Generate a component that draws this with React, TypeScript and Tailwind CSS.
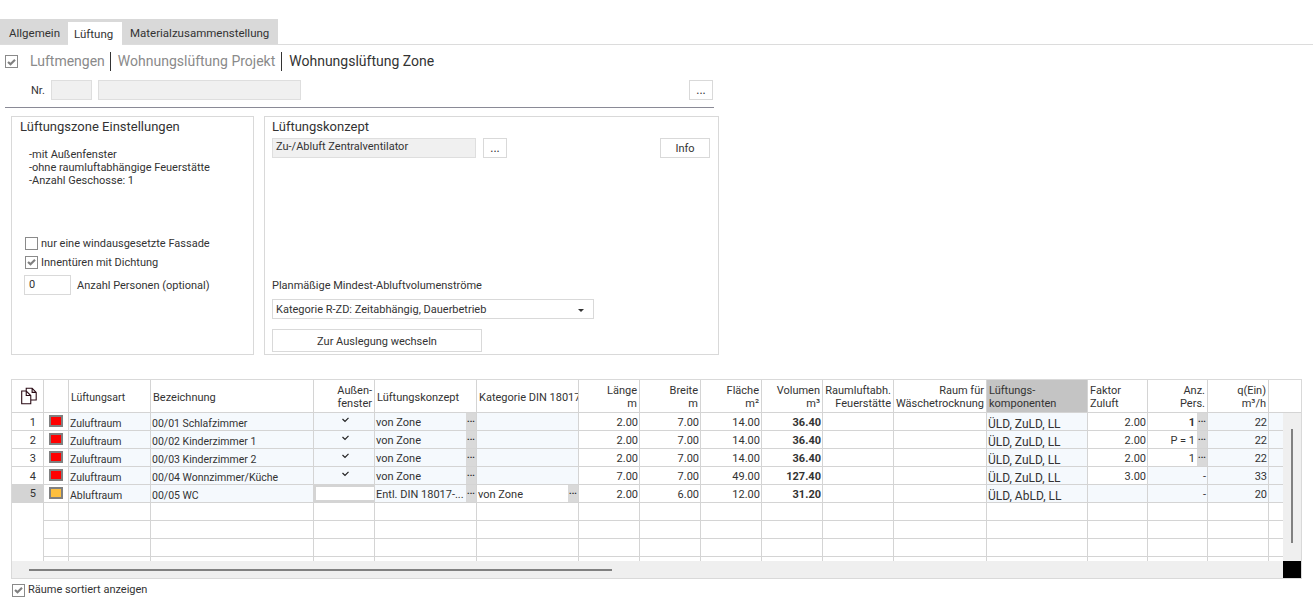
import React from "react";

const font = "font-['Roboto',sans-serif]";

function CheckBox({ checked }: { checked?: boolean }) {
  return (
    <span className="w-[13px] h-[13px] border border-[#8a8a8a] bg-white flex items-center justify-center shrink-0">
      {checked && (
        <svg width="9" height="8" viewBox="0 0 9 8">
          <path d="M1 4 L3.5 6.2 L8 1.8" fill="none" stroke="#808080" strokeWidth="2.2" />
        </svg>
      )}
    </span>
  );
}

function DotsButton({ className }: { className: string }) {
  return (
    <div className={`border border-[#d9d9d9] bg-white flex items-center justify-center text-[12px] text-[#333] ${className}`}>...</div>
  );
}

// Roboto sits a bit high compared to the original font, this pushes text down 2px
function T({ className = "", children }: { className?: string; children?: React.ReactNode }) {
  return <span className={`pt-[4px] ${className}`}>{children}</span>;
}

const colClasses = [
  "w-[32px]", "w-[25px]", "w-[82px]", "w-[163px]", "w-[61px]", "w-[102px]", "w-[102px]", "w-[61px]", "w-[61px]",
  "w-[61px]", "w-[61px]", "w-[71px]", "w-[93px]", "w-[101px]", "w-[60px]", "w-[60px]", "w-[61px]",
];

type Head = { lines: string[]; right?: boolean; bg?: string; size?: string };
const heads: Head[] = [
  { lines: [] },
  { lines: [] },
  { lines: ["Lüftungsart"], size: "text-[10.5px]" },
  { lines: ["Bezeichnung"] },
  { lines: ["Außen-", "fenster"], right: true },
  { lines: ["Lüftungskonzept"] },
  { lines: ["Kategorie DIN 18017"] },
  { lines: ["Länge", "m"], right: true },
  { lines: ["Breite", "m"], right: true },
  { lines: ["Fläche", "m²"], right: true },
  { lines: ["Volumen", "m³"], right: true },
  { lines: ["Raumluftabh.", "Feuerstätte"], right: true },
  { lines: ["Raum für", "Wäschetrocknung"], right: true },
  { lines: ["Lüftungs-", "komponenten"], bg: "bg-[#c4c4c4]" },
  { lines: ["Faktor", "Zuluft"] },
  { lines: ["Anz.", "Pers."], right: true },
  { lines: ["q(Ein)", "m³/h"], right: true },
];

const rows = [
  { n: 1, color: "bg-[#ff0000]", art: "Zuluftraum", name: "00/01 Schlafzimmer", fenster: true, konzept: "von Zone", kat: "", l: "2.00", b: "7.00", f: "14.00", v: "36.40", komp: "ÜLD, ZuLD, LL", fak: "2.00", anz: "1", anzBold: true, q: "22" },
  { n: 2, color: "bg-[#ff0000]", art: "Zuluftraum", name: "00/02 Kinderzimmer 1", fenster: true, konzept: "von Zone", kat: "", l: "2.00", b: "7.00", f: "14.00", v: "36.40", komp: "ÜLD, ZuLD, LL", fak: "2.00", anz: "P = 1", q: "22" },
  { n: 3, color: "bg-[#ff0000]", art: "Zuluftraum", name: "00/03 Kinderzimmer 2", fenster: true, konzept: "von Zone", kat: "", l: "2.00", b: "7.00", f: "14.00", v: "36.40", komp: "ÜLD, ZuLD, LL", fak: "2.00", anz: "1", q: "22" },
  { n: 4, color: "bg-[#ff0000]", art: "Zuluftraum", name: "00/04 Wonnzimmer/Küche", fenster: true, konzept: "von Zone", kat: "", l: "7.00", b: "7.00", f: "49.00", v: "127.40", komp: "ÜLD, ZuLD, LL", fak: "3.00", anz: "-", q: "33" },
  { n: 5, color: "bg-[#fdbf3f]", art: "Abluftraum", name: "00/05 WC", fenster: false, konzept: "Entl. DIN 18017-...", kat: "von Zone", l: "2.00", b: "6.00", f: "12.00", v: "31.20", komp: "ÜLD, AbLD, LL", fak: "", anz: "-", q: "20" },
];

const tint = "bg-[#f5f9fd]";

function Cell({ i, className = "", children }: { i: number; className?: string; children?: React.ReactNode }) {
  return (
    <div className={`${colClasses[i]} shrink-0 h-full border-r border-[#d4d4d4] flex items-center overflow-hidden whitespace-nowrap ${className}`}>
      {children}
    </div>
  );
}

function Ellipsis() {
  return (
    <span className="w-[10px] h-full bg-[#d9d9d9] shrink-0 flex items-start justify-center text-[9px] leading-[12px] font-bold text-[#222]">...</span>
  );
}

function DataRow({ r }: { r: (typeof rows)[number] }) {
  const last = r.n === 5;
  return (
    <div className="flex h-[18px] border-b border-[#d4d4d4] shrink-0">
      <Cell i={0} className={`justify-end pr-[7px] ${last ? "bg-[#d4d4d4] pb-[2px]" : ""}`}><T>{r.n}</T></Cell>
      <Cell i={1} className="justify-center pr-px">
        <span className="w-[14px] h-[12px] border-[2px] border-[#808080] mb-[2px] flex"><span className={`flex-1 ${r.color}`} /></span>
      </Cell>
      <Cell i={2} className={`${tint} pl-px`}><T className="text-[10.5px]">{r.art}</T></Cell>
      <Cell i={3} className={`${tint} pl-px`}><T className="text-[10.5px]">{r.name}</T></Cell>
      <Cell i={4} className={last ? "border-[2px] border-[#d4d4d4] bg-white" : `${tint} justify-center pl-[3px]`}>
        {r.fenster && (
          <svg width="7" height="6" viewBox="0 0 7 6" className="mb-[3px]">
            <path d="M0.5 2 L3 4.5 L6.5 0.8" fill="none" stroke="#222" strokeWidth="1.2" />
          </svg>
        )}
      </Cell>
      <Cell i={5} className={`${tint} pl-px justify-between`}>
        <T>{r.konzept}</T>
        <Ellipsis />
      </Cell>
      <Cell i={6} className={last ? "pl-px justify-between" : tint}>
        {last && <T>{r.kat}</T>}
        {last && <Ellipsis />}
      </Cell>
      <Cell i={7} className="justify-end pr-px"><T>{r.l}</T></Cell>
      <Cell i={8} className="justify-end pr-px"><T>{r.b}</T></Cell>
      <Cell i={9} className="justify-end pr-px"><T>{r.f}</T></Cell>
      <Cell i={10} className="justify-end pr-px font-bold"><T>{r.v}</T></Cell>
      <Cell i={11} />
      <Cell i={12} />
      <Cell i={13} className={`${tint} pl-px`}><T className="text-[12px]">{r.komp}</T></Cell>
      <Cell i={14} className={`justify-end pr-px ${last ? tint : ""}`}><T>{r.fak}</T></Cell>
      {r.n < 4 ? (
        <Cell i={15} className="justify-end">
          <T className={`pr-[2px] ${r.anzBold ? "font-bold" : ""}`}>{r.anz}</T>
          <Ellipsis />
        </Cell>
      ) : (
        <Cell i={15} className={`justify-end pr-px ${tint}`}><T>{r.anz}</T></Cell>
      )}
      <Cell i={16} className={`justify-end pr-px ${tint}`}><T>{r.q}</T></Cell>
      <div className={`flex-1 ${tint}`} />
    </div>
  );
}

function EmptyRow() {
  return (
    <div className="flex h-[18px] shrink-0">
      <div className={`${colClasses[0]} shrink-0 border-r border-[#d4d4d4]`} />
      <div className="flex flex-1 border-b border-[#d4d4d4]">
        {colClasses.slice(1).map((_, i) => (
          <Cell key={i} i={i + 1} />
        ))}
      </div>
    </div>
  );
}

export default function App() {
  return (
    <div className={`w-[1313px] h-[612px] bg-white overflow-hidden text-[#333] ${font}`}>
      {/* Tabs */}
      <div className="pt-[19px]">
        <div className="flex h-[26px] border-b border-[#dcdcdc] text-[11.5px]">
          <div className="w-[68px] h-[25px] bg-[#d9d9d9] pl-[9px] pt-[4px] flex items-center">Allgemein</div>
          <div className="w-[54px] h-[26px] bg-[#d9d9d9] pt-[3px]">
            <div className="h-full bg-white pl-[6px] pt-[2px] flex items-center">Lüftung</div>
          </div>
          <div className="w-[156px] h-[25px] bg-[#d9d9d9] pl-[8px] pt-[4px] flex items-center">Materialzusammenstellung</div>
        </div>
      </div>

      {/* Heading */}
      <div className="flex items-center h-[19px] mt-[7px] pl-[5px] text-[14px]">
        <CheckBox checked />
        <span className="ml-[12px] pr-[5px] text-[#8a8a8a]">Luftmengen</span>
        <span className="pl-[7px] pr-[6px] border-l border-[#333] text-[#8a8a8a] leading-[19px]">Wohnungslüftung Projekt</span>
        <span className="pl-[7px] border-l border-[#333] leading-[19px]">Wohnungslüftung Zone</span>
      </div>

      {/* Nr row */}
      <div className="flex items-center h-[20px] mt-[9px] pl-[31px] w-[713px] text-[11px]">
        <span className="w-[20px] pt-[2px]">Nr.</span>
        <div className="w-[41px] h-[20px] bg-[#f0f0f0] border border-[#dedede]" />
        <div className="w-[203px] h-[20px] ml-[6px] bg-[#f0f0f0] border border-[#dedede]" />
        <DotsButton className="w-[24px] h-[20px] ml-auto" />
      </div>
      <div className="h-px w-[709px] ml-[5px] mt-[7px] bg-[#8a8a96]" />

      {/* Panels */}
      <div className="flex mt-[8px] ml-[11px] h-[239px] gap-[10px] text-[11px]">
        <div className="w-[243px] border border-[#d9d9d9] flex flex-col pl-[8px]">
          <div className="text-[13px] mt-[1px] leading-[18px]">Lüftungszone Einstellungen</div>
          <div className="mt-[12px] ml-[9px] leading-[13px]">
            <div>-mit Außenfenster</div>
            <div>-ohne raumluftabhängige Feuerstätte</div>
            <div>-Anzahl Geschosse: 1</div>
          </div>
          <div className="flex items-center gap-[3px] mt-[49px] ml-[5px] h-[14px]">
            <CheckBox />
            <span className="pt-[2px]">nur eine windausgesetzte Fassade</span>
          </div>
          <div className="flex items-center gap-[3px] mt-[5px] ml-[5px] h-[14px]">
            <CheckBox checked />
            <span className="pt-[2px]">Innentüren mit Dichtung</span>
          </div>
          <div className="flex items-center mt-[6px] ml-[4px]">
            <div className="w-[47px] h-[20px] border border-[#d9d9d9] pl-[4px] flex items-center">0</div>
            <span className="ml-[6px] pt-[2px]">Anzahl Personen (optional)</span>
          </div>
        </div>

        <div className="w-[455px] border border-[#d9d9d9] flex flex-col pl-[7px] pr-[8px]">
          <div className="text-[13px] mt-[1px] leading-[18px]">Lüftungskonzept</div>
          <div className="flex mt-[2px]">
            <div className="w-[204px] h-[20px] bg-[#f0f0f0] border border-[#dedede] pl-[3px] flex items-center pb-[1px]">Zu-/Abluft Zentralventilator</div>
            <DotsButton className="w-[24px] h-[20px] ml-[7px]" />
            <div className="w-[50px] h-[20px] ml-auto border border-[#d9d9d9] flex items-center justify-center pt-[3px]">Info</div>
          </div>
          <div className="mt-[121px] leading-[14px]">Planmäßige Mindest-Abluftvolumenströme</div>
          <div className="w-[322px] h-[20px] mt-[6px] border border-[#d9d9d9] pl-[3px] pr-[9px] pt-[2px] flex items-center justify-between">
            <span>Kategorie R-ZD: Zeitabhängig, Dauerbetrieb</span>
            <svg width="6" height="3" viewBox="0 0 6 3"><path d="M0 0 H6 L3 3 Z" fill="#333" /></svg>
          </div>
          <div className="w-[210px] h-[23px] mt-[10px] border border-[#d9d9d9] flex items-center justify-center pt-[4px]">Zur Auslegung wechseln</div>
        </div>
      </div>

      {/* Room grid */}
      <div className={`mt-[24px] ml-[11px] w-[1291px] h-[200px] border border-[#d9d9d9] flex flex-col text-[11px]`}>
        <div className="flex h-[33px] border-b border-[#d4d4d4] shrink-0">
          {heads.map((h, i) => (
            <Cell key={i} i={i} className={`${h.bg ?? ""} ${h.size ?? ""} ${h.right ? "justify-end text-right pr-[2px]" : "pl-[2px]"} leading-[13px]`}>
              {i === 0 ? (
                <svg width="32" height="32" viewBox="0 0 32 32">
                  <path d="M13.5 10.5 V7.5 H20 L24.5 12 V20.5 H18.5 M20 7.5 V12 H24.5 M13.5 10.5 H8.5 V24.5 H18.5 V15.5 L13.5 10.5 V15.5 H18.5" fill="none" stroke="#2a0a14" strokeWidth="1.2" />
                </svg>
              ) : (
                <div className="pt-[2px]">{h.lines.map((l) => <div key={l}>{l}</div>)}</div>
              )}
            </Cell>
          ))}
        </div>
        <div className="flex h-[148px] shrink-0">
          <div className="w-[1272px] flex flex-col overflow-hidden">
            {rows.map((r) => <DataRow key={r.n} r={r} />)}
            <EmptyRow />
            <EmptyRow />
            <EmptyRow />
            <EmptyRow />
          </div>
          <div className="w-[18px] bg-[#efefef] flex justify-center pt-[16px]">
            <div className="w-[2px] h-[114px] bg-[#808080]" />
          </div>
        </div>
        <div className="flex flex-1">
          <div className="flex-1 bg-[#efefef] pl-[17px] pt-[8px]">
            <div className="w-[583px] h-[2px] bg-[#808080]" />
          </div>
          <div className="w-[18px] bg-black" />
        </div>
      </div>

      {/* Footer option */}
      <div className="flex items-center gap-[3px] mt-[3px] ml-[12px] text-[11px]">
        <CheckBox checked />
        <span>Räume sortiert anzeigen</span>
      </div>
    </div>
  );
}
